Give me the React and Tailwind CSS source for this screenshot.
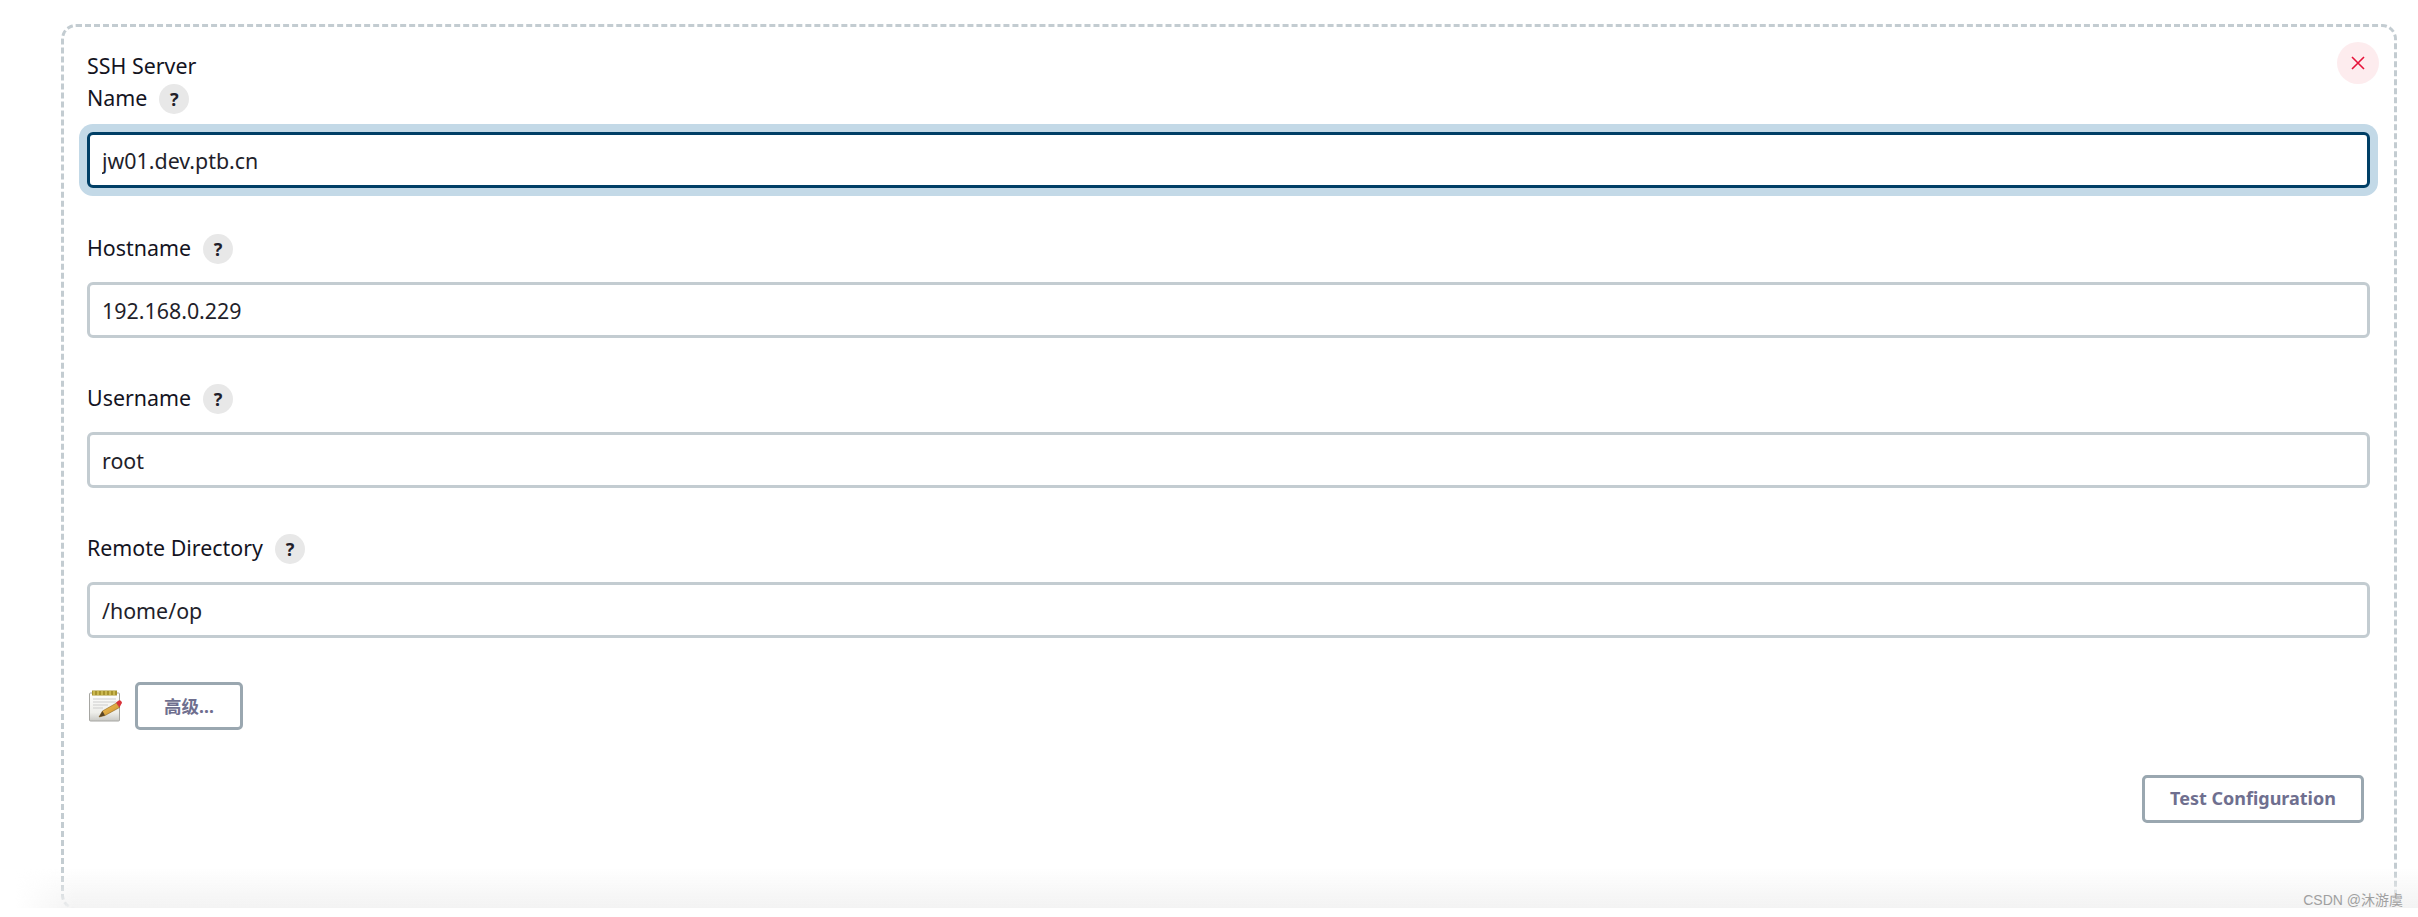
import React from 'react';

function Help() {
  return (
    <span className="flex h-[30px] w-[30px] items-center justify-center rounded-full bg-[#e8e8e8] text-[18px] font-bold leading-none text-[#20202a]">
      ?
    </span>
  );
}

function Field({ label, value, focused, top }) {
  return (
    <div className={top}>
      <div className="flex h-[30px] items-center gap-[12px] text-[21.4px] leading-[30px] text-[#14141f]">
        <span className="pb-[2px]">{label}</span>
        <Help />
      </div>
      <input
        readOnly
        value={value}
        className={
          focused
            ? 'mt-[18px] block h-[56px] w-full rounded-[6px] border-[3px] border-[#003f66] bg-white px-[12px] text-[21.4px] text-[#1f1f2b] shadow-[0_0_0_8px_#c3d9e7] outline-none'
            : 'mt-[18px] block h-[56px] w-full rounded-[6px] border-[3px] border-[#c3ccd1] bg-white px-[12px] text-[21.4px] text-[#1f1f2b] outline-none'
        }
      />
    </div>
  );
}

function NotepadIcon() {
  return (
    <svg width="33" height="33" viewBox="0 0 33 33" className="ml-[2px] shrink-0">
      <defs>
        <linearGradient id="pad" x1="0" y1="0" x2="0" y2="1">
          <stop offset="0" stopColor="#ffffff" />
          <stop offset="0.7" stopColor="#eeeeea" />
          <stop offset="1" stopColor="#c8c8c4" />
        </linearGradient>
        <linearGradient id="pencil" x1="0" y1="0" x2="1" y2="1">
          <stop offset="0" stopColor="#f4c860" />
          <stop offset="1" stopColor="#c98a24" />
        </linearGradient>
      </defs>
      <rect x="0.5" y="3" width="30" height="28" rx="1" fill="url(#pad)" stroke="#a6a6a2" />
      <rect x="3" y="0.5" width="25" height="5" fill="#a8932e" />
      <path d="M5 1v4M9 1v4M13 1v4M17 1v4M21 1v4M25 1v4" stroke="#d9c860" strokeWidth="1.4" />
      <path d="M4 9h23M4 12h23M4 15h15M4 18h10" stroke="#cdcdcd" strokeWidth="1" />
      <path d="M10 27l3.5-6 14-8 3 4.5-14.5 8z" fill="url(#pencil)" stroke="#8a6420" strokeWidth="0.6" />
      <path d="M10 27l3.5-6 2.500 4.500z" fill="#5a4526" />
      <path d="M27 12.500l2-1.500a2 2 0 0 1 3 3.500l-1.500 3z" fill="#d8343a" />
    </svg>
  );
}

export default function App() {
  return (
    <div className="h-[917px] w-full bg-white font-['Noto_Sans','Open_Sans',sans-serif]">
      <div className="relative h-[908px] overflow-hidden pt-[24px]">
        <div className="relative ml-[61px] h-[886px] w-[2336px] rounded-[15px] border-[3px] border-dashed border-[#c3ccd1] pl-[23px] pr-[24px]">
          <button className="absolute right-[15px] top-[15px] flex h-[42px] w-[42px] items-center justify-center rounded-full bg-[#fdecee]">
            <svg width="14" height="14" viewBox="0 0 14 14">
              <path d="M1 1l12 12M13 1L1 13" stroke="#e6133a" strokeWidth="1.6" />
            </svg>
          </button>
          <div className="pt-[21px] text-[21.4px] leading-[36px] text-[#14141f]">SSH Server</div>
          <Field label="Name" value="jw01.dev.ptb.cn" focused />
          <Field label="Hostname" value="192.168.0.229" top="mt-[46px]" />
          <Field label="Username" value="root" top="mt-[46px]" />
          <Field label="Remote Directory" value="/home/op" top="mt-[46px]" />
          <div className="mt-[44px] flex items-center gap-[13px]">
            <NotepadIcon />
            <button className="h-[48px] w-[108px] rounded-[5px] border-[3px] border-[#9aa7b0] bg-white text-[17.5px] font-bold text-[#6f6f8f] font-['Noto_Sans','Noto_Sans_CJK_SC',sans-serif]">
              高级...
            </button>
          </div>
          <div className="mt-[45px] flex justify-end pr-[6px]">
            <button className="h-[48px] w-[222px] rounded-[5px] border-[3px] border-[#9aa7b0] bg-white pb-[2px] text-[18px] font-bold text-[#6f6f8f]">
              Test Configuration
            </button>
          </div>
        </div>
        <div className="absolute bottom-0 left-[15px] right-0 h-[40px] bg-[linear-gradient(to_bottom,rgba(243,243,243,0),#f3f3f3)] [mask-image:linear-gradient(to_right,transparent,black_60px)]"></div>
        <div className="absolute bottom-[-2px] right-[15px] font-['Liberation_Sans','Noto_Sans_CJK_SC',sans-serif] text-[14px] leading-[20px] text-[#a0a0a0]">
          CSDN @沐游虞
        </div>
      </div>
    </div>
  );
}
